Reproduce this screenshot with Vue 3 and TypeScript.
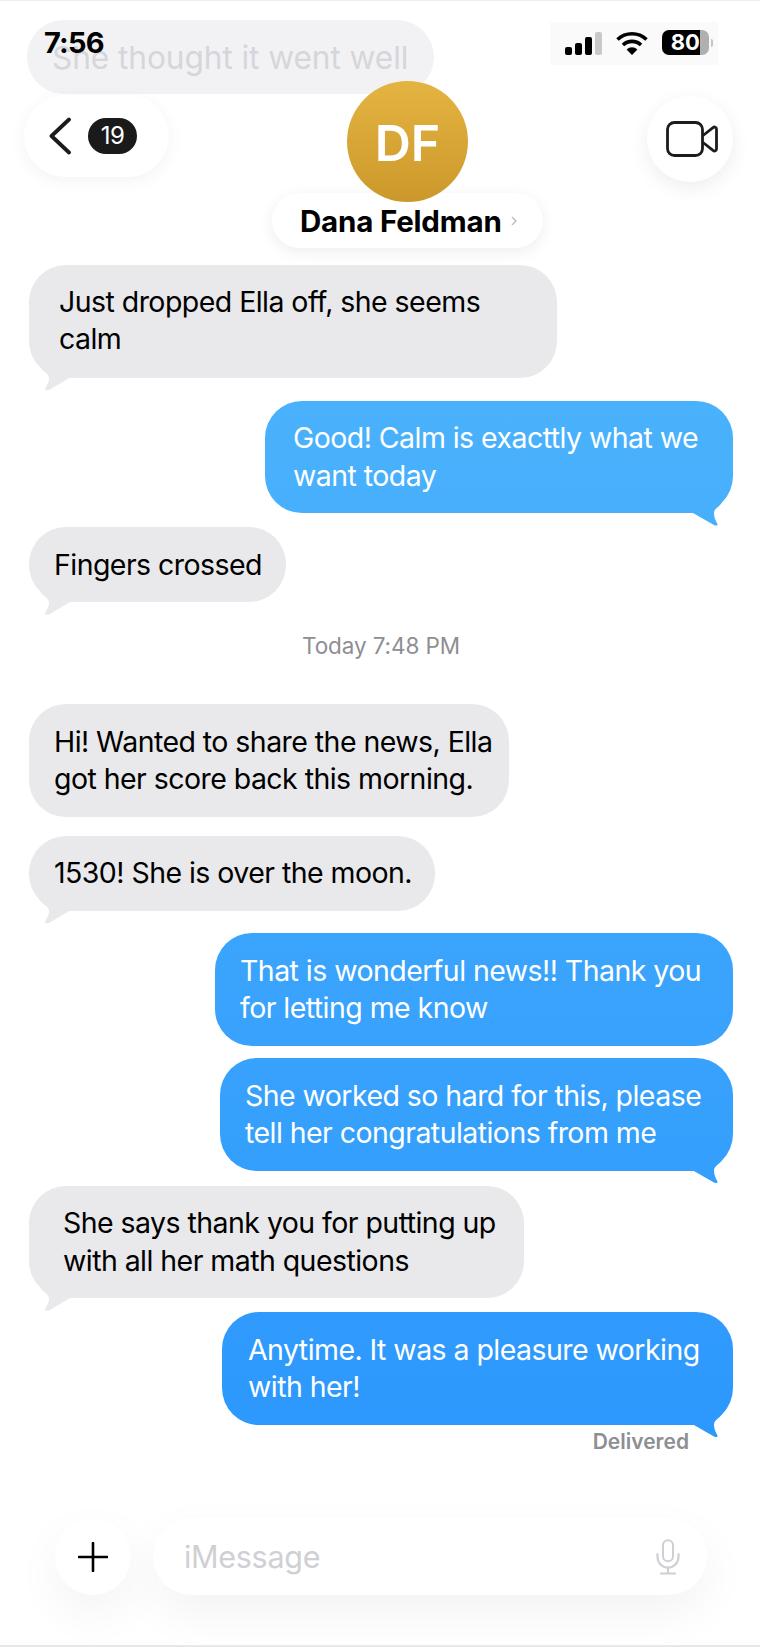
<template>
  <div class="page">
    <div class="thread">
      <div class="ghost">She thought it went well</div>
      <template v-for="m in messages" :key="m.id">
        <div v-if="m.stamp" class="stamp">{{ m.stamp }}</div>
        <div
          v-else
          class="bubble"
          :class="[m.mine ? 'mine' : 'theirs', { tail: m.tail, lifted: m.lifted }]"
          :style="{ width: m.width + 'px', paddingLeft: m.pad + 'px', marginTop: m.gap + 'px' }"
        >{{ m.text }}</div>
      </template>
      <div class="delivered">Delivered</div>
    </div>

    <div class="composer">
      <button class="plus" type="button" aria-label="Add">
        <svg viewBox="0 0 30 30" width="30" height="30" aria-hidden="true">
          <path d="M15 1v28M1 15h28" stroke="#000" stroke-width="2.6" fill="none" stroke-linecap="round" />
        </svg>
      </button>
      <div class="input">
        <span class="placeholder">iMessage</span>
        <svg viewBox="0 0 26 36" width="26" height="36" aria-hidden="true">
          <rect x="8" y="1.2" width="10" height="21" rx="5" fill="none" stroke="#cfcfd4" stroke-width="2" />
          <path d="M2.500 15v3a10.500 10.500 0 0 0 21 0v-3M13 28.500v5M6 34.500h14" fill="none" stroke="#cfcfd4" stroke-width="2.2" stroke-linecap="round" />
        </svg>
      </div>
    </div>

    <!-- header floats over the thread -->
    <div class="time">7:56</div>
    <div class="status">
      <div class="bars">
        <i class="b1"></i><i class="b2"></i><i class="b3"></i><i class="b4"></i>
      </div>
      <svg class="wifi" viewBox="0 0 32 24" width="32" height="24" aria-hidden="true">
        <path d="M1.500 8.500a21 21 0 0 1 29 0" fill="none" stroke="#000" stroke-width="3.6" />
        <path d="M7 14a13 13 0 0 1 18 0" fill="none" stroke="#000" stroke-width="3.6" />
        <path d="M16 24l-5.400-5.600a7.600 7.600 0 0 1 10.800 0z" fill="#000" />
      </svg>
      <div class="battery"><span>80</span></div>
      <i class="nub"></i>
    </div>

    <div class="back">
      <svg viewBox="0 0 24 38" width="24" height="38" aria-hidden="true">
        <path d="M21 2.500L3.500 19 21 35.500" fill="none" stroke="#1c1c1e" stroke-width="3.8" stroke-linecap="round" stroke-linejoin="round" />
      </svg>
      <span class="badge">19</span>
    </div>

    <div class="name-pill">
      <span class="name">Dana Feldman</span>
      <svg viewBox="0 0 6 10" width="6" height="10" aria-hidden="true">
        <path d="M1 1l4 4-4 4" fill="none" stroke="#bdbdc0" stroke-width="1.5" />
      </svg>
    </div>
    <div class="avatar">DF</div>

    <div class="video">
      <svg viewBox="0 0 52 36" width="52" height="36" aria-hidden="true">
        <rect x="1.500" y="1.500" width="35" height="33" rx="7" fill="none" stroke="#1c1c1e" stroke-width="2.8" />
        <path d="M37 14.500L47 6.600c1.600-1.200 3.500-.4 3.500 1.600v19.600c0 2-1.900 2.800-3.500 1.600L37 21.500" fill="none" stroke="#1c1c1e" stroke-width="2.8" stroke-linejoin="round" />
      </svg>
    </div>
  </div>
</template>

<script setup lang="ts">
interface Message {
  id: number
  text?: string
  stamp?: string
  mine?: boolean
  tail?: boolean
  lifted?: boolean
  width?: number
  pad?: number
  gap?: number
}

const messages: Message[] = [
  { id: 1, text: 'Just dropped Ella off, she seems\ncalm', width: 528, pad: 30, gap: 171, tail: true, lifted: true },
  { id: 2, text: 'Good! Calm is exacttly what we\nwant today', width: 468, pad: 28, gap: 23, mine: true, tail: true },
  { id: 3, text: 'Fingers crossed', width: 257, pad: 25, gap: 14, tail: true },
  { id: 4, stamp: 'Today 7:48 PM' },
  { id: 5, text: 'Hi! Wanted to share the news, Ella\ngot her score back this morning.', width: 480, pad: 25, gap: 0 },
  { id: 6, text: '1530! She is over the moon.', width: 406, pad: 25, gap: 19, tail: true },
  { id: 7, text: 'That is wonderful news!! Thank you\nfor letting me know', width: 518, pad: 25, gap: 22.5, mine: true },
  { id: 8, text: 'She worked so hard for this, please\ntell her congratulations from me', width: 513, pad: 25, gap: 12.5, mine: true, tail: true },
  { id: 9, text: 'She says thank you for putting up\nwith all her math questions', width: 495, pad: 34, gap: 15, tail: true },
  { id: 10, text: 'Anytime. It was a pleasure working\nwith her!', width: 511, pad: 26, gap: 14, mine: true, tail: true }
]
</script>

<style>
html, body { margin: 0; background: #fff; }
</style>

<style scoped>
.page {
  position: relative;
  width: 760px;
  height: 1647px;
  overflow: hidden;
  display: flex;
  flex-direction: column;
  background: #fff;
  border-top: 1px solid #eeeeef;
  border-bottom: 2px solid #e8e8e8;
  box-sizing: border-box;
  font-family: Inter, "Liberation Sans", sans-serif;
  color: #000;
}

.thread {
  display: flex;
  flex-direction: column;
  padding: 19px 27px 0 29px;
}

.ghost {
  width: 407px;
  height: 74px;
  box-sizing: border-box;
  padding-left: 25px;
  margin-left: -2px;
  border-radius: 37px;
  background: #f2f2f5;
  color: #d6d6da;
  font-size: 31.7px;
  line-height: 76px;
  letter-spacing: -0.1px;
}

.bubble {
  position: relative;
  box-sizing: border-box;
  padding: 18.75px 0;
  border-radius: 37px;
  font-size: 28.5px;
  line-height: 37.5px;
  letter-spacing: -0.55px;
  white-space: pre-line;
}

.lifted {
  padding-top: 17.75px;
  padding-bottom: 19.75px;
}

.theirs {
  align-self: flex-start;
  background: #e9e9eb;
}

.mine {
  align-self: flex-end;
  color: #fff;
  background: linear-gradient(180deg, #4ab2fc 400px, #2d98fd 1430px) fixed;
}

.tail::after {
  content: "";
  position: absolute;
  bottom: -13px;
  width: 44px;
  height: 28px;
  background: inherit;
}

.theirs.tail::after {
  left: 6px;
  clip-path: path("M5 4 C7 9 14 10 14 16 C14 20 11 24 10 26 C10 28 12 28 14 27.500 L35 15 L35 0 L8 0 Z");
}

.mine.tail::after {
  right: 6px;
  clip-path: path("M39 4 C37 9 31 10 31 15 C31 20 33 23 34.500 26 C35 27.500 33 28 31 27 L10 15 L10 0 L36 0 Z");
}

.stamp {
  margin: 29.5px 0 44.5px;
  text-align: center;
  color: #8e8e93;
  font-size: 22.5px;
  line-height: 28px;
  letter-spacing: -0.1px;
}

.delivered {
  align-self: flex-end;
  margin: 3.5px 44px 0 0;
  color: #8e8e93;
  font-size: 21px;
  line-height: 28px;
  font-weight: 600;
}

.composer {
  margin-top: auto;
  margin-bottom: 50px;
  padding: 0 53px 0 55px;
  display: flex;
  gap: 22px;
}

.plus, .input {
  height: 77px;
  background: #fff;
  box-shadow: 0 18px 48px rgba(0, 0, 0, 0.05);
}

.plus {
  flex: none;
  width: 76px;
  padding: 0;
  border: 0;
  border-radius: 50%;
  display: flex;
  align-items: center;
  justify-content: center;
}

.input {
  flex: 1;
  border-radius: 39px;
  display: flex;
  align-items: center;
  justify-content: space-between;
  padding: 0 26px 0 31px;
}

.placeholder {
  color: #d0d0d4;
  font-size: 30.5px;
  letter-spacing: -0.3px;
}

.time {
  position: absolute;
  left: 44px;
  top: 24px;
  font-size: 29px;
  line-height: 36px;
  font-weight: 700;
  letter-spacing: -0.8px;
}

.status {
  position: absolute;
  left: 550px;
  top: 21px;
  width: 168px;
  height: 43px;
  background: #fafafa;
  display: flex;
  align-items: flex-end;
  padding: 0 0 10px 15px;
  box-sizing: border-box;
}

.bars {
  display: flex;
  align-items: flex-end;
  gap: 3.3px;
}

.bars i {
  display: block;
  width: 6.7px;
  border-radius: 2px;
  background: #000;
}

.bars .b1 { height: 8px; }
.bars .b2 { height: 12px; }
.bars .b3 { height: 18px; }
.bars .b4 { height: 23px; background: #c9c9c9; }

.wifi { margin-left: 14px; }

.battery {
  margin-left: 14px;
  width: 47px;
  height: 25px;
  border-radius: 7px;
  background: linear-gradient(90deg, #000 80%, #b0b0b0 80%);
  color: #fff;
  font-size: 22px;
  font-weight: 700;
  line-height: 25px;
  padding-left: 9px;
  box-sizing: border-box;
}

.nub {
  width: 2px;
  height: 8px;
  margin: 0 0 8px 2px;
  background: #c4c4c4;
  border-radius: 0 2px 2px 0;
}

.back {
  position: absolute;
  left: 24px;
  top: 94px;
  width: 145px;
  height: 82px;
  border-radius: 41px;
  background: #fff;
  box-shadow: 0 4px 18px rgba(0, 0, 0, 0.05);
  display: flex;
  align-items: center;
  gap: 16px;
  padding-left: 24px;
  box-sizing: border-box;
}

.badge {
  width: 49px;
  height: 36px;
  border-radius: 18px;
  background: #1a1a1a;
  color: #fff;
  font-size: 24px;
  line-height: 36px;
  text-align: center;
  letter-spacing: -0.5px;
}

.name-pill {
  position: absolute;
  left: 272px;
  top: 192px;
  width: 271px;
  height: 55px;
  border-radius: 28px;
  background: #fff;
  box-shadow: 0 4px 16px rgba(0, 0, 0, 0.07);
  display: flex;
  align-items: center;
  gap: 9px;
  padding-left: 28px;
  box-sizing: border-box;
}

.name {
  font-size: 29.5px;
  font-weight: 700;
  letter-spacing: -0.2px;
}

.avatar {
  position: absolute;
  left: 347px;
  top: 80px;
  width: 121px;
  height: 121px;
  border-radius: 50%;
  background: linear-gradient(180deg, #e4b441, #cc982b);
  color: #fff;
  font-size: 50px;
  font-weight: 600;
  line-height: 125px;
  text-align: center;
}

.video {
  position: absolute;
  left: 647px;
  top: 95px;
  width: 86px;
  height: 86px;
  border-radius: 50%;
  background: #fff;
  box-shadow: 0 6px 20px rgba(0, 0, 0, 0.07);
  display: flex;
  align-items: center;
  justify-content: center;
  padding-left: 3px;
  box-sizing: border-box;
}
</style>
